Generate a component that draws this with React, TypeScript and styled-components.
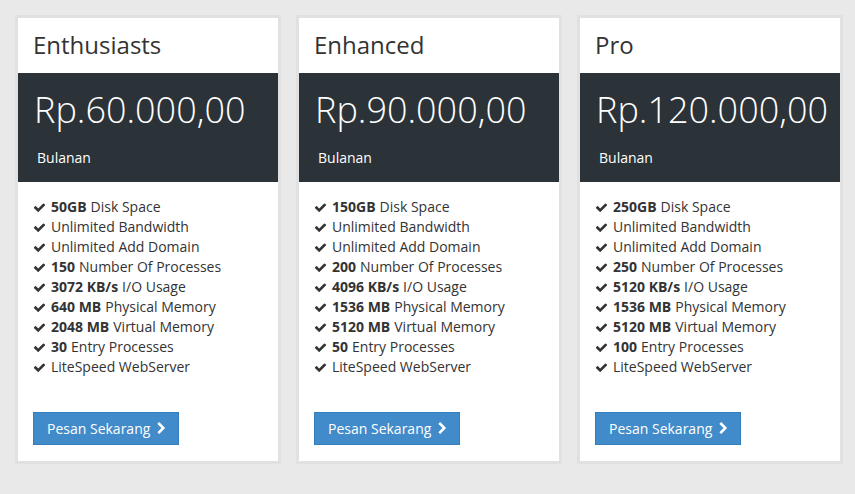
import React from 'react';
import styled, { createGlobalStyle } from 'styled-components';

const GlobalStyle = createGlobalStyle`
  html, body {
    margin: 0;
    padding: 0;
    background: #e9e9e9;
    font-family: "Open Sans", "Liberation Sans", sans-serif;
    color: #333;
  }
  * { box-sizing: border-box; }
`;

const PlanRow = styled.div`
  display: flex;
  gap: 15px;
  padding: 15px 12px 30px 15px;
`;

const Card = styled.div`
  width: 266px;
  background: #fff;
  border: 3px solid #e1e1e1;
  display: flex;
  flex-direction: column;
`;

const PlanName = styled.h3`
  margin: 0;
  height: 55px;
  padding: 11px 15px 0 15px;
  font-size: 24px;
  font-weight: 400;
  line-height: 32px;
  color: #333;
`;

const PriceBox = styled.div`
  height: 109px;
  background: #2b3238;
  color: #fff;
  padding: 12px 15px 0 16px;
`;

const Price = styled.div`
  font-size: 36px;
  font-weight: 300;
  line-height: 50px;
`;

const Period = styled.div`
  margin-top: 13px;
  padding-left: 3px;
  font-size: 14px;
  line-height: 20px;
`;

const Features = styled.ul`
  list-style: none;
  margin: 0;
  padding: 15px 15px 0 15px;
`;

const Feature = styled.li`
  display: flex;
  align-items: center;
  font-size: 14px;
  line-height: 20px;
  color: #333;
  white-space: nowrap;

  b {
    font-weight: 700;
    margin-right: 4px;
  }
`;

const Check = styled.svg`
  width: 13px;
  height: 13px;
  margin-right: 5px;
  fill: #333;
  flex: none;
`;

const Footer = styled.div`
  padding: 35px 15px 16px 15px;
`;

const OrderButton = styled.a`
  display: inline-flex;
  align-items: center;
  gap: 5px;
  height: 33px;
  padding: 0 10px 0 13px;
  background: #428bca;
  border: 1px solid #357ebd;
  color: #fff;
  font-size: 14px;
  text-decoration: none;
`;

const Chevron = styled.svg`
  width: 13px;
  height: 13px;
  fill: #fff;
`;

type Item = { strong?: string; text: string };
type Plan = { name: string; price: string; items: Item[] };

const plans: Plan[] = [
  {
    name: 'Enthusiasts',
    price: 'Rp.60.000,00',
    items: [
      { strong: '50GB', text: 'Disk Space' },
      { text: 'Unlimited Bandwidth' },
      { text: 'Unlimited Add Domain' },
      { strong: '150', text: 'Number Of Processes' },
      { strong: '3072 KB/s', text: 'I/O Usage' },
      { strong: '640 MB', text: 'Physical Memory' },
      { strong: '2048 MB', text: 'Virtual Memory' },
      { strong: '30', text: 'Entry Processes' },
      { text: 'LiteSpeed WebServer' },
    ],
  },
  {
    name: 'Enhanced',
    price: 'Rp.90.000,00',
    items: [
      { strong: '150GB', text: 'Disk Space' },
      { text: 'Unlimited Bandwidth' },
      { text: 'Unlimited Add Domain' },
      { strong: '200', text: 'Number Of Processes' },
      { strong: '4096 KB/s', text: 'I/O Usage' },
      { strong: '1536 MB', text: 'Physical Memory' },
      { strong: '5120 MB', text: 'Virtual Memory' },
      { strong: '50', text: 'Entry Processes' },
      { text: 'LiteSpeed WebServer' },
    ],
  },
  {
    name: 'Pro',
    price: 'Rp.120.000,00',
    items: [
      { strong: '250GB', text: 'Disk Space' },
      { text: 'Unlimited Bandwidth' },
      { text: 'Unlimited Add Domain' },
      { strong: '250', text: 'Number Of Processes' },
      { strong: '5120 KB/s', text: 'I/O Usage' },
      { strong: '1536 MB', text: 'Physical Memory' },
      { strong: '5120 MB', text: 'Virtual Memory' },
      { strong: '100', text: 'Entry Processes' },
      { text: 'LiteSpeed WebServer' },
    ],
  },
];

const CheckIcon = () => (
  <Check viewBox="0 0 1792 1792">
    <path d="M1671 566q0 40-28 68l-724 724-136 136q-28 28-68 28t-68-28l-136-136-362-362q-28-28-28-68t28-68l136-136q28-28 68-28t68 28l294 295 656-657q28-28 68-28t68 28l136 136q28 28 28 68z" />
  </Check>
);

const App: React.FC = () => (
  <>
    <GlobalStyle />
    <PlanRow>
      {plans.map(plan => (
        <Card key={plan.name}>
          <PlanName>{plan.name}</PlanName>
          <PriceBox>
            <Price>{plan.price}</Price>
            <Period>Bulanan</Period>
          </PriceBox>
          <Features>
            {plan.items.map((item, i) => (
              <Feature key={i}>
                <CheckIcon />
                {item.strong && <b>{item.strong}</b>}
                {item.text}
              </Feature>
            ))}
          </Features>
          <Footer>
            <OrderButton href="#">
              Pesan Sekarang
              <Chevron viewBox="0 0 1792 1792">
                <path d="M1363 877l-742 742q-19 19-45 19t-45-19l-166-166q-19-19-19-45t19-45l531-531-531-531q-19-19-19-45t19-45l166-166q19-19 45-19t45 19l742 742q19 19 19 45t-19 45z" />
              </Chevron>
            </OrderButton>
          </Footer>
        </Card>
      ))}
    </PlanRow>
  </>
);

export default App;
